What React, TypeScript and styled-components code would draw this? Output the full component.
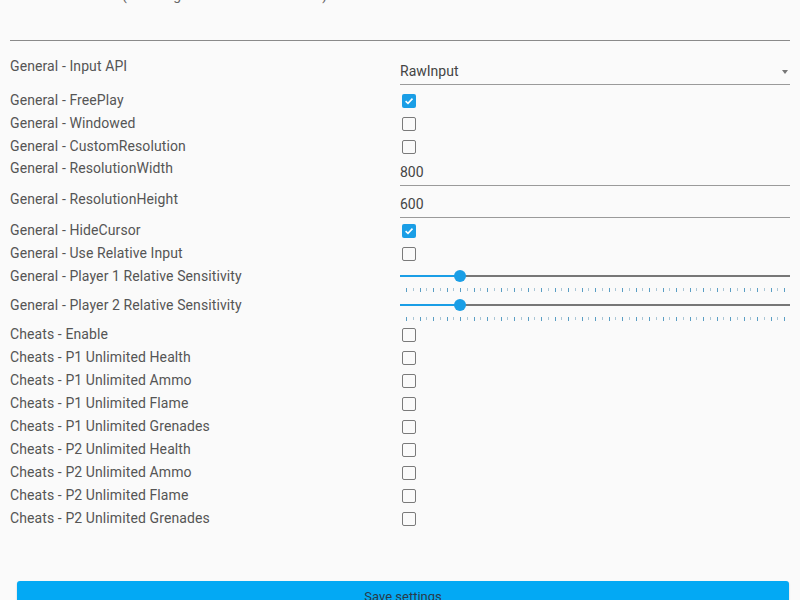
import styled, { createGlobalStyle } from "styled-components";

const GlobalStyle = createGlobalStyle`
    html, body {
        margin: 0;
        padding: 0;
        background: #fafafa;
        font-family: Roboto, "Noto Sans", "Liberation Sans", sans-serif;
        overflow: hidden;
    }
`;

const Page = styled.div`
    width: 800px;
    height: 600px;
    padding: 0 10px;
    box-sizing: border-box;
    display: flex;
    flex-direction: column;
`;

const PathNote = styled.div`
    margin-top: -12px;
    height: 14px;
    font-size: 14px;
    line-height: 14px;
    color: #666;
    white-space: nowrap;
`;

const Divider = styled.div`
    margin-top: 38px;
    height: 1px;
    background: #8a8a8a;
    width: 780px;
`;

const Form = styled.div`
    margin-top: 16px;
    display: flex;
    flex-direction: column;
`;

const Row = styled.div<{ $height: number; $gap?: number }>`
    display: grid;
    grid-template-columns: 390px 390px;
    height: ${({ $height }) => $height}px;
    margin-bottom: ${({ $gap }) => $gap ?? 0}px;
`;

const Label = styled.div<{ $lineHeight: number }>`
    font-size: 14px;
    letter-spacing: 0.1px;
    color: #555;
    line-height: ${({ $lineHeight }) => $lineHeight}px;
    white-space: nowrap;
`;

const Cell = styled.div`
    display: flex;
    flex-direction: column;
    justify-content: flex-start;
`;

const CheckCell = styled.div`
    display: flex;
    align-items: center;
    padding-left: 2px;
`;

const Box = styled.div<{ $checked?: boolean }>`
    width: 14px;
    height: 14px;
    box-sizing: border-box;
    border-radius: 2px;
    border: ${({ $checked }) => ($checked ? "none" : "1.5px solid #7a7a7a")};
    background: ${({ $checked }) => ($checked ? "#1a9ee6" : "transparent")};
    display: flex;
    align-items: center;
    justify-content: center;
`;

const Field = styled.div`
    position: relative;
    padding: 5px 0 4px;
    line-height: 18px;
    font-size: 14px;
    color: #444;
    border-bottom: 1px solid #9a9a9a;
`;

const Caret = styled.span`
    position: absolute;
    right: 2px;
    top: 13px;
    width: 0;
    height: 0;
    border-left: 3.5px solid transparent;
    border-right: 3.5px solid transparent;
    border-top: 4px solid #777;
`;

const SliderWrap = styled.div`
    position: relative;
    height: 29px;
`;

const Track = styled.div`
    position: absolute;
    left: 0;
    right: 0;
    top: 10px;
    height: 2px;
    background: #777;
`;

const Fill = styled.div`
    position: absolute;
    left: 0;
    top: 10px;
    height: 2px;
    background: #1a9ee6;
`;

const Thumb = styled.div`
    position: absolute;
    top: 5px;
    width: 12px;
    height: 12px;
    margin-left: -6px;
    border-radius: 50%;
    background: #1a9ee6;
`;

const Ticks = styled.div`
    position: absolute;
    left: 6px;
    right: 5px;
    top: 23px;
    display: flex;
    justify-content: space-between;
`;

const Tick = styled.span<{ $major?: boolean }>`
    width: 1px;
    height: ${({ $major }) => ($major ? 4 : 3)}px;
    background: ${({ $major }) => ($major ? "#5a9ec4" : "#a9c6d6")};
`;

const Footer = styled.div`
    margin-top: auto;
    padding: 0 1px 0 7px;
`;

const SaveButton = styled.button`
    width: 772px;
    height: 30px;
    margin-bottom: -11px;
    border: none;
    border-radius: 3px;
    background: #03a9f4;
    color: #2a3a48;
    font-family: Roboto, "Liberation Sans", sans-serif;
    font-size: 13px;
    padding-top: 8px;
    display: flex;
    justify-content: center;
    align-items: flex-start;
    box-shadow: 0 1px 2px rgba(0, 0, 0, 0.2);
`;

const Check = () => (
    <svg width="10" height="10" viewBox="0 0 10 10">
        <path d="M1.6 5.2 L4 7.4 L8.5 2.6" fill="none" stroke="#fff" strokeWidth="1.6" />
    </svg>
);

const CheckRow = ({ label, checked }: { label: string; checked?: boolean }) => (
    <Row $height={23}>
        <Label $lineHeight={23}>{label}</Label>
        <CheckCell>
            <Box $checked={checked}>{checked && <Check />}</Box>
        </CheckCell>
    </Row>
);

const Slider = ({ value }: { value: number }) => {
    const ticks = Array.from({ length: 57 }, (_, i) => i);
    return (
        <SliderWrap>
            <Track />
            <Fill style={{ width: `${value * 100}%` }} />
            <Thumb style={{ left: `${value * 100}%` }} />
            <Ticks>
                {ticks.map((i) => (
                    <Tick key={i} $major={i % 2 === 0} />
                ))}
            </Ticks>
        </SliderWrap>
    );
};

const SliderRow = ({ label, value }: { label: string; value: number }) => (
    <Row $height={29}>
        <Label $lineHeight={23}>{label}</Label>
        <Slider value={value} />
    </Row>
);

const general = [
    { label: "General - FreePlay", checked: true },
    { label: "General - Windowed" },
    { label: "General - CustomResolution" },
];

const cheats = [
    "Cheats - Enable",
    "Cheats - P1 Unlimited Health",
    "Cheats - P1 Unlimited Ammo",
    "Cheats - P1 Unlimited Flame",
    "Cheats - P1 Unlimited Grenades",
    "Cheats - P2 Unlimited Health",
    "Cheats - P2 Unlimited Ammo",
    "Cheats - P2 Unlimited Flame",
    "Cheats - P2 Unlimited Grenades",
];

export default function App() {
    return (
        <>
            <GlobalStyle />
            <Page>
                <PathNote>Game Executable (Lindbergh or GameBox location)</PathNote>
                <Divider />
                <Form>
                    <Row $height={29} $gap={3}>
                        <Label $lineHeight={18}>General - Input API</Label>
                        <Cell>
                            <Field>
                                RawInput
                                <Caret />
                            </Field>
                        </Cell>
                    </Row>
                    {general.map((g) => (
                        <CheckRow key={g.label} label={g.label} checked={g.checked} />
                    ))}
                    <Row $height={28} $gap={4}>
                        <Label $lineHeight={21}>General - ResolutionWidth</Label>
                        <Cell>
                            <Field>800</Field>
                        </Cell>
                    </Row>
                    <Row $height={29}>
                        <Label $lineHeight={18}>General - ResolutionHeight</Label>
                        <Cell>
                            <Field>600</Field>
                        </Cell>
                    </Row>
                    <CheckRow label="General - HideCursor" checked />
                    <CheckRow label="General - Use Relative Input" />
                    <SliderRow label="General - Player 1 Relative Sensitivity" value={0.154} />
                    <SliderRow label="General - Player 2 Relative Sensitivity" value={0.154} />
                    {cheats.map((c) => (
                        <CheckRow key={c} label={c} />
                    ))}
                </Form>
                <Footer>
                    <SaveButton>Save settings</SaveButton>
                </Footer>
            </Page>
        </>
    );
}
